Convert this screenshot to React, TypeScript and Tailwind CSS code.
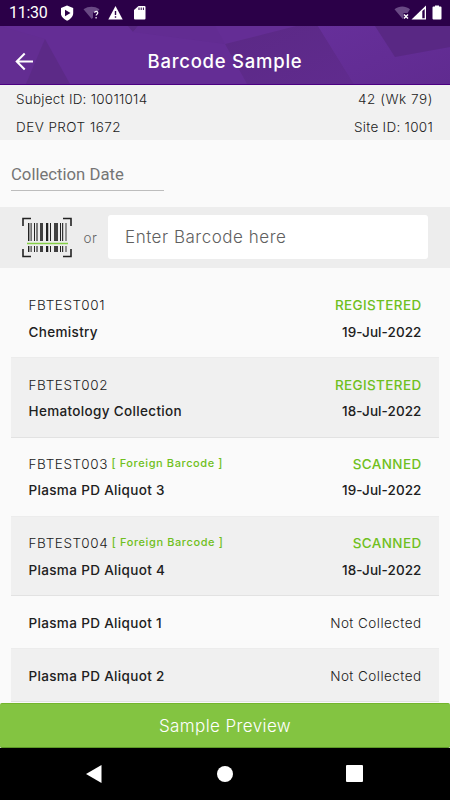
import clsx from "clsx";

type Sample = {
  barcode?: string;
  foreign?: boolean;
  name: string;
  status: string;
  date?: string;
};

const SAMPLES: Sample[] = [
  { barcode: "FBTEST001", name: "Chemistry", status: "REGISTERED", date: "19-Jul-2022" },
  { barcode: "FBTEST002", name: "Hematology Collection", status: "REGISTERED", date: "18-Jul-2022" },
  { barcode: "FBTEST003", foreign: true, name: "Plasma PD Aliquot 3", status: "SCANNED", date: "19-Jul-2022" },
  { barcode: "FBTEST004", foreign: true, name: "Plasma PD Aliquot 4", status: "SCANNED", date: "18-Jul-2022" },
  { name: "Plasma PD Aliquot 1", status: "Not Collected" },
  { name: "Plasma PD Aliquot 2", status: "Not Collected" },
];

// [x, width, opacity]
const BARS: [number, number, number][] = [
  [6, 1, 1], [7, 2, 0.4], [9, 1, 0.6], [12, 1, 1], [14, 2, 0.55],
  [18, 3, 0.85], [24, 2, 1], [26, 0.5, 0.5], [28, 1, 1], [32, 4, 0.85],
  [38, 1, 1], [40, 1, 0.9], [41, 0.5, 0.4], [43, 2, 0.45],
];

function StatusBar() {
  return (
    <div className="flex h-[26px] shrink-0 items-center justify-between bg-[#2b0048] pr-2 pl-[9px] text-white">
      <div className="flex items-center">
        <span className="w-[52px] font-['Roboto',sans-serif] text-[16px] leading-none tracking-[-0.3px]">11:30</span>
        <svg width="90" height="18" viewBox="0 0 90 18" fill="none">
          <path d="M6 1.500L12.200 4v5c0 3.400-2.700 6.200-6.200 7.800C2.500 15.200-.2 12.400-.2 9V4z" fill="#fff" />
          <path d="M4 5.800L9.500 9L4 12.200z" fill="#2b0048" />
          <path d="M22.500 5.300C27.500 2 33.500 2 38.500 5.300L36 8.500H32v5.200L30.700 15z" fill="#694984" />
          <path d="M33.500 8.700c.4-1.800 3.500-1.600 3.300.2-.1 1.300-1.700 1.300-1.700 2.700M35.100 13v1.500" stroke="#fff" strokeWidth="1.200" />
          <path d="M54.500 2L61.700 15.500H47.300z" fill="#fff" />
          <path d="M54.500 7v4M54.500 12.200v1.500" stroke="#2b0048" strokeWidth="1.400" />
          <path d="M77.500 2H83.500Q84.500 2 84.500 3V14.500Q84.500 15.500 83.500 15.500H74Q73 15.500 73 14.500V6z" fill="#fff" />
          <path d="M78 3.500v2.500M80.200 3.500v2.500M82.400 3.500v2.500" stroke="#2b0048" strokeWidth="1" />
        </svg>
      </div>
      <svg width="49" height="18" viewBox="0 0 49 18" fill="none">
        <path d="M1.500 5.300C6.500 1.700 12 1.700 17 5.300L14.500 9H10.500v5L9.700 15z" fill="#694984" />
        <path d="M11 10.500l4 4M15 10.500l-4 4" stroke="#fff" strokeWidth="1.400" />
        <path d="M18.500 15.500L33 1.500V15.500z" fill="#fff" />
        <path d="M29.300 7L31.700 5V14.300H29.300z" fill="#2b0048" />
        <path d="M42 2.500V1.500h4v1h1.500q1 0 1 1V14.500q0 1-1 1H40.500q-1 0-1-1V3.500q0-1 1-1z" fill="#fff" />
      </svg>
    </div>
  );
}

function Header() {
  return (
    <header className="relative flex h-[59px] shrink-0 items-center justify-center overflow-hidden border-b border-[#4b0082] bg-[#642d95]">
      <svg className="absolute inset-0" width="450" height="58" viewBox="0 0 450 58">
        <defs>
          <linearGradient id="facet" x1="0" y1="0" x2="1" y2="1">
            <stop offset="0" stopColor="#5b2986" />
            <stop offset="1" stopColor="#602b8e" />
          </linearGradient>
          <linearGradient id="sheen" x1="0" y1="0" x2="1" y2="1">
            <stop offset="0" stopColor="#662f9a" />
            <stop offset="1" stopColor="#602b90" />
          </linearGradient>
        </defs>
        <path d="M0 0L45 13L26 58H0z" fill="#632d92" />
        <path d="M45 13L26 58H70z" fill="#5c2a87" />
        <path d="M128 0H138L133 6z" fill="#5a2984" />
        <path d="M138 0H215L225 18L133 6z" fill="#622c92" />
        <path d="M225 18L296 0H318L354 58H247z" fill="url(#facet)" />
        <path d="M318 0H450V58H354z" fill="url(#sheen)" />
        <path d="M375 0H450V21L395 31z" fill="#592884" />
      </svg>
      <svg className="absolute top-[26px] left-[15px]" width="19" height="19" viewBox="0 0 19 19" fill="none">
        <path d="M18 9.500H2M9.700 1.500L1.700 9.500L9.700 17.500" stroke="#fff" strokeWidth="2" />
      </svg>
      <h1 className="relative top-[6px] text-[18.500px] leading-none font-medium tracking-[0.75px] text-white">Barcode Sample</h1>
    </header>
  );
}

function BarcodeIcon() {
  return (
    <svg className="shrink-0" width="50" height="41" viewBox="0 0 50 41" fill="none">
      <path d="M9 1.500H1V9M41 1.500H49V9M1 32V39.500H9M49 32V39.500H41" stroke="#222" strokeWidth="1.600" />
      {BARS.map(([x, w, o]) => (
        <g key={x} fill="#222" opacity={o}>
          <rect x={x} y="6" width={w} height="18" />
          <rect x={x} y="29" width={w} height="6" />
        </g>
      ))}
      <path d="M5 26.500H46" stroke="#85d046" strokeWidth="1.300" />
    </svg>
  );
}

function SampleRow({ sample, shaded }: { sample: Sample; shaded: boolean }) {
  const { barcode, foreign, name, status, date } = sample;
  const collected = Boolean(barcode);

  return (
    <li
      className={clsx(
        "flex flex-col justify-center border-b px-[17.5px] pt-[1.5px] text-[13.500px] leading-[26.500px] text-[#202020]",
        collected ? "h-[79.300px]" : "h-[53px]",
        shaded ? "border-[#e2e2e2] bg-[#f0f0f0]" : "border-[#ececec] bg-[#fafafa]",
      )}
    >
      {collected && (
        <div className="flex justify-between">
          <span className="flex">
            <span className="font-light tracking-[0.6px]">{barcode}</span>
            {foreign && (
              <span className="ml-[3.5px] text-[11px] leading-[25px] font-medium tracking-[0.6px] text-[#6fbf20]">
                [ Foreign Barcode ]
              </span>
            )}
          </span>
          <span className="font-medium tracking-[0.36px] text-[#6fbf20]">{status}</span>
        </div>
      )}
      <div className="flex justify-between">
        <span className="font-medium tracking-[0.34px]">{name}</span>
        {date ? (
          <span className="font-medium tracking-[0.08px]">{date}</span>
        ) : (
          <span className="font-light tracking-[0.45px]">{status}</span>
        )}
      </div>
    </li>
  );
}

export default function App() {
  return (
    <div className="flex h-[800px] w-[450px] flex-col overflow-hidden bg-[#fafafa] font-['Inter',sans-serif]">
      <StatusBar />
      <Header />

      <section className="h-[55px] shrink-0 bg-[#f1f1f1] pr-[17px] pl-4 text-[13.500px] font-light text-[#222]">
        <div className="flex h-7 items-center justify-between">
          <span className="tracking-[0.24px]">Subject ID: 10011014</span>
          <span className="tracking-[0.55px]">42 (Wk 79)</span>
        </div>
        <div className="flex h-7 items-center justify-between">
          <span className="tracking-[0.45px]">DEV PROT 1672</span>
          <span className="tracking-[0.28px]">Site ID: 1001</span>
        </div>
      </section>

      <div className="h-[67px] shrink-0 pl-[11px]">
        <div className="flex h-[51px] w-[153px] items-end border-b border-[#bdbdbd] pb-1 font-['Roboto',sans-serif] text-[16.700px] leading-[22px] text-[#757575]">
          Collection Date
        </div>
      </div>

      <section className="flex h-[61px] shrink-0 items-center bg-[#ededed] pl-[22px]">
        <BarcodeIcon />
        <span className="w-9 pt-px pl-[11.500px] text-[13.500px] font-light tracking-[0.4px] text-[#666]">or</span>
        <div className="-mt-px flex h-11 w-80 items-center rounded-[3px] bg-white pt-px pl-[17px] text-[17px] font-light tracking-[0.52px] text-[#606060]">
          Enter Barcode here
        </div>
      </section>

      <ul className="mx-[11px] min-h-0 flex-1 overflow-hidden pt-[11px]">
        {SAMPLES.map((sample, i) => (
          <SampleRow key={sample.name} sample={sample} shaded={i % 2 === 1} />
        ))}
      </ul>

      <button className="h-[45px] shrink-0 rounded-[2px] border-y border-t-[#73b52c] border-b-[#5d9827] bg-[#83c441] pt-0.5 text-[17px] font-light tracking-[0.4px] text-white">
        Sample Preview
      </button>

      <nav className="flex h-[52px] shrink-0 justify-between bg-black pt-[17px] pr-[87px] pl-[86px]">
        <svg width="16" height="18" viewBox="0 0 16 18" fill="#fff">
          <path d="M15.500 0V18L0 9z" />
        </svg>
        <span className="mt-[0.5px] ml-[2px] size-4 rounded-full bg-white" />
        <span className="size-[17px] rounded-[1px] bg-white" />
      </nav>
    </div>
  );
}
